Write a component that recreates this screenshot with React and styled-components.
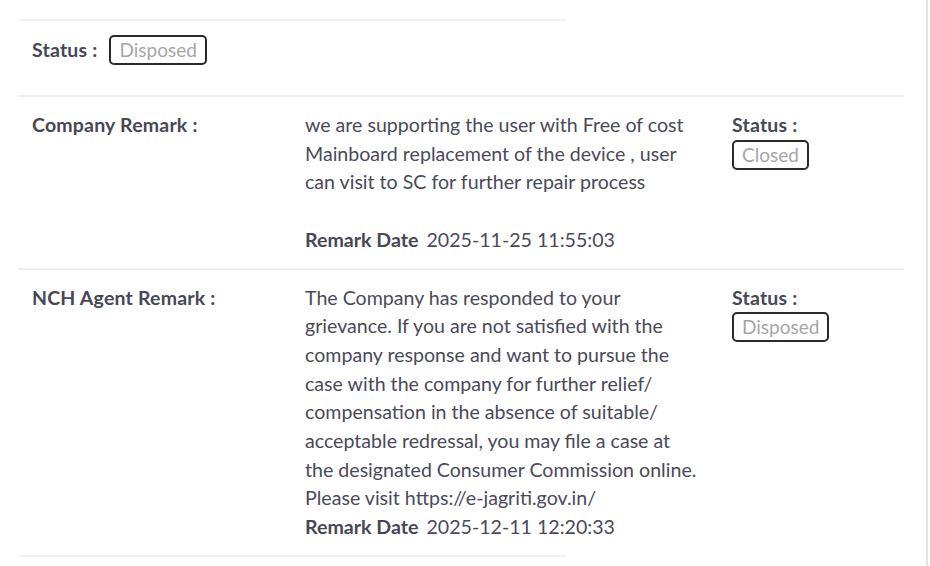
import React from 'react';
import styled, { createGlobalStyle } from 'styled-components';

const GlobalStyle = createGlobalStyle`
    body {
        margin: 0;
        background: #fff;
        font-family: Lato, "Open Sans", sans-serif;
        color: #4a4a5a;
    }
`;

const Page = styled.div`
    width: 928px;
    height: 566px;
    border-right: 2px solid #e4e4e4;
    overflow: hidden;
    box-sizing: border-box;
    padding-top: 19px;
`;

const Panel = styled.div`
    width: 886px;
    margin-left: 18px;
`;

const Divider = styled.div`
    height: 2px;
    background: #efeff2;
    width: ${(p) => (p.$short ? '547px' : '100%')};
`;

const StatusBar = styled.div`
    display: flex;
    align-items: center;
    gap: 12px;
    padding: 14px 0 30px 14px;
`;

const Label = styled.span`
    font-weight: 700;
    font-size: 19.5px;
    letter-spacing: 0.2px;
    line-height: 28.7px;
    color: #474757;
`;

const Badge = styled.span`
    display: inline-block;
    box-sizing: border-box;
    height: 30px;
    line-height: 26px;
    padding: 0 8px;
    border: 2px solid #2a2a2a;
    border-radius: 5px;
    font-size: 19px;
    color: #a6a6a6;
`;

const RemarkRow = styled.div`
    display: grid;
    grid-template-columns: 273px 427px 1fr;
    padding: 14px 0 13px 14px;
    font-size: 19.6px;
    line-height: 28.7px;
`;

const Body = styled.div`
    padding-right: 33px;
`;

const Text = styled.p`
    margin: 0 0 ${(p) => (p.$gap ? '28.7px' : '0')};
`;

const DateLine = styled.div`
    strong {
        font-weight: 700;
        margin-right: 8px;
        color: #474757;
    }
`;

const StatusCol = styled.div`
    display: flex;
    flex-direction: column;
    align-items: flex-start;
`;

const remarks = [
    {
        label: 'Company Remark :',
        text: 'we are supporting the user with Free of cost Mainboard replacement of the device , user can visit to SC for further repair process',
        gap: true,
        date: '2025-11-25 11:55:03',
        status: 'Closed',
    },
    {
        label: 'NCH Agent Remark :',
        text: 'The Company has responded to your grievance. If you are not satisfied with the company response and want to pursue the case with the company for further relief/ compensation in the absence of suitable/ acceptable redressal, you may file a case at the designated Consumer Commission online. Please visit https://e-jagriti.gov.in/',
        gap: false,
        date: '2025-12-11 12:20:33',
        status: 'Disposed',
    },
];

const App = () => {
    return (
        <Page>
            <GlobalStyle />
            <Panel>
                <Divider $short />
                <StatusBar>
                    <Label>Status :</Label>
                    <Badge>Disposed</Badge>
                </StatusBar>
                {remarks.map((r) => (
                    <React.Fragment key={r.label}>
                        <Divider />
                        <RemarkRow>
                            <Label>{r.label}</Label>
                            <Body>
                                <Text $gap={r.gap}>{r.text}</Text>
                                <DateLine>
                                    <strong>Remark Date</strong>
                                    {r.date}
                                </DateLine>
                            </Body>
                            <StatusCol>
                                <Label>Status :</Label>
                                <Badge>{r.status}</Badge>
                            </StatusCol>
                        </RemarkRow>
                    </React.Fragment>
                ))}
                <Divider $short />
            </Panel>
        </Page>
    );
};

export default App;
